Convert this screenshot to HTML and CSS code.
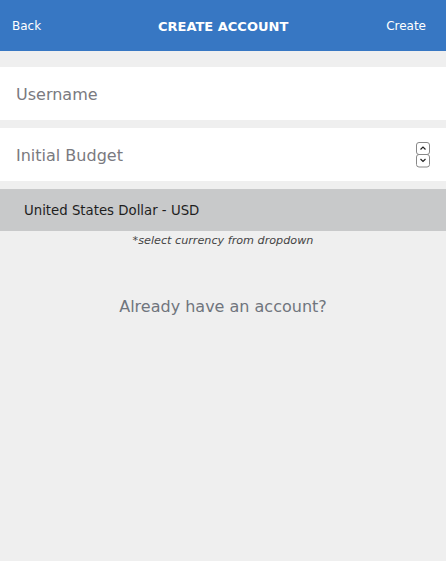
FILE: index.html
```html
<!DOCTYPE html>
<html>
<head>
<meta charset="utf-8">
<link rel="stylesheet" href="styles.css">
</head>
<body>
<header class="bar">
  <span class="bar-btn">Back</span>
  <span class="bar-title">CREATE ACCOUNT</span>
  <span class="bar-btn">Create</span>
</header>
<main class="form">
  <div class="field"><span class="placeholder">Username</span></div>
  <div class="field">
    <span class="placeholder">Initial Budget</span>
    <span class="spinner">
      <svg width="14" height="26" viewBox="0 0 14 26">
        <rect x="0.5" y="0.5" width="13" height="12" rx="2.5" fill="#fff" stroke="#888"/>
        <rect x="0.5" y="12.5" width="13" height="12.5" rx="2.5" fill="#fff" stroke="#888"/>
        <path d="M4.5 7.5 L7 5 L9.5 7.5" fill="none" stroke="#222" stroke-width="1.2"/>
        <path d="M4.5 17 L7 19.5 L9.5 17" fill="none" stroke="#222" stroke-width="1.2"/>
      </svg>
    </span>
  </div>
  <div class="select">United States Dollar - USD</div>
  <p class="hint">*select currency from dropdown</p>
  <p class="login">Already have an account?</p>
</main>
</body>
</html>
```
FILE: styles.css
```css
html, body {
  margin: 0;
  padding: 0;
  background: #efefef;
  font-family: "DejaVu Sans", Verdana, sans-serif;
}
.bar {
  height: 51px;
  background: #3777c3;
  color: #fff;
  display: flex;
  align-items: center;
  justify-content: space-between;
  padding: 1px 20px 0 12px;
  box-sizing: border-box;
}
.bar-btn {
  font-size: 12px;
}
.bar-title {
  font-size: 13px;
  font-weight: bold;
  padding-left: 19px;
}
.form {
  display: flex;
  flex-direction: column;
  padding-top: 16px;
}
.field {
  height: 53px;
  background: #fff;
  display: flex;
  align-items: center;
  justify-content: space-between;
  padding: 1px 16px 0;
  box-sizing: border-box;
  margin-bottom: 8px;
}
.placeholder {
  font-size: 16px;
  color: #7a7a80;
}
.spinner {
  display: flex;
  margin-top: -1px;
}
.spinner svg { display: block; }
.select {
  height: 42px;
  background: #c8c9ca;
  color: #1e1e1e;
  font-size: 13.3px;
  display: flex;
  align-items: center;
  padding-left: 24px;
}
.hint {
  margin: 3px 0 0;
  text-align: center;
  font-size: 11.2px;
  font-style: italic;
  color: #444;
}
.login {
  margin: 50px 0 0;
  text-align: center;
  font-size: 16px;
  color: #70757d;
}
```
